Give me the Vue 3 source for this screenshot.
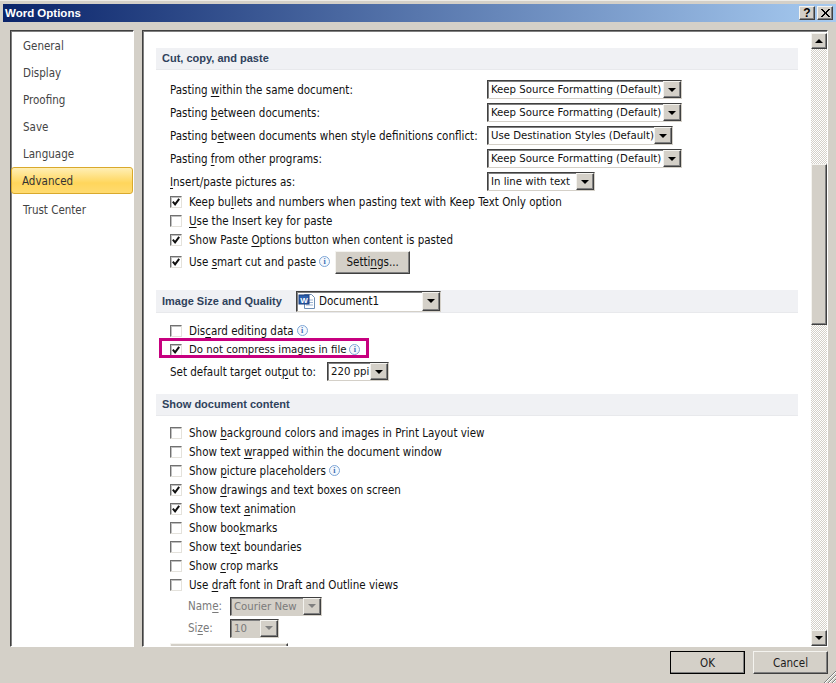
<script setup>
const nav = [
  { t: 'General' }, { t: 'Display' }, { t: 'Proofing' }, { t: 'Save' }, { t: 'Language' },
  { t: 'Advanced', active: true }, { t: 'Trust Center', last: true }
]
const split = (s) => {
  const i = s.indexOf('&')
  return i < 0 ? [s, '', ''] : [s.slice(0, i), s[i + 1], s.slice(i + 2)]
}
const pasteRows = [
  { l: 'Pasting &within the same document:', v: 'Keep Source Formatting (Default)', w: 195 },
  { l: 'Pasting &between documents:', v: 'Keep Source Formatting (Default)', w: 195 },
  { l: 'Pasting b&etween documents when style definitions conflict:', v: 'Use Destination Styles (Default)', w: 186 },
  { l: 'Pasting &from other programs:', v: 'Keep Source Formatting (Default)', w: 195 },
  { l: '&Insert/paste pictures as:', v: 'In line with text', w: 108 }
]
const pasteChecks = [
  { l: 'Keep bu&llets and numbers when pasting text with Keep Text Only option', c: true },
  { l: '&Use the Insert key for paste', c: false },
  { l: 'Show Paste &Options button when content is pasted', c: true }
]
const showChecks = [
  { l: 'Show &background colors and images in Print Layout view', c: false },
  { l: 'Show text &wrapped within the document window', c: false },
  { l: 'Show &picture placeholders', c: false, info: true },
  { l: 'Show &drawings and text boxes on screen', c: true },
  { l: 'Show text &animation', c: true },
  { l: 'Show boo&kmarks', c: false },
  { l: 'Show te&xt boundaries', c: false },
  { l: 'Show &crop marks', c: false },
  { l: 'Use &draft font in Draft and Outline views', c: false }
]
</script>

<template>
  <div class="window">
    <header class="titlebar">
      <span class="title">Word Options</span>
      <div class="caption-btns">
        <button class="cap raised">?</button>
        <button class="cap raised">
          <svg width="11" height="10" viewBox="0 0 11 10"><path d="M1 1l8 8M2 1l8 8M9 1l-8 8M10 1l-8 8" stroke="#000" stroke-width="1" fill="none"/></svg>
        </button>
      </div>
    </header>

    <main class="body">
      <nav class="nav sunken">
        <div v-for="n in nav" :key="n.t" class="nav-item" :class="{ active: n.active, last: n.last }">{{ n.t }}</div>
      </nav>

      <div class="pane sunken">
        <div class="content">
          <h3 class="section">Cut, copy, and paste</h3>
          <div class="pad paste-rows">
            <div v-for="r in pasteRows" :key="r.l" class="combo-row">
              <label class="combo-label"><template v-for="(p, i) in [split(r.l)]" :key="i">{{ p[0] }}<u>{{ p[1] }}</u>{{ p[2] }}</template></label>
              <div class="combo" :style="{ width: r.w + 'px' }">
                <span class="combo-text">{{ r.v }}</span>
                <span class="drop raised"><i class="tri"></i></span>
              </div>
            </div>
          </div>
          <div class="pad checks paste-checks">
            <div v-for="r in pasteChecks" :key="r.l" class="check-row">
              <span class="box"><svg v-if="r.c" width="10" height="10" viewBox="0 0 11 11"><path d="M2 5l2.500 3L9 2" stroke="#111" stroke-width="2.200" fill="none"/></svg></span>
              <span><template v-for="(p, i) in [split(r.l)]" :key="i">{{ p[0] }}<u>{{ p[1] }}</u>{{ p[2] }}</template></span>
            </div>
            <div class="check-row smart">
              <span class="box"><svg width="10" height="10" viewBox="0 0 11 11"><path d="M2 5l2.500 3L9 2" stroke="#111" stroke-width="2.200" fill="none"/></svg></span>
              <span>Use <u>s</u>mart cut and paste</span>
              <i class="info">i</i>
              <button class="settings raised">Setti<u>n</u>gs...</button>
            </div>
          </div>

          <h3 class="section image-head">
            <span class="image-title">Image Size and Quality</span>
            <div class="doc-combo">
              <svg class="doc-ico" width="18" height="17" viewBox="0 0 18 17">
                <path d="M6.500 1.500h7l3 3v11h-10z" fill="#fff" stroke="#6f8fb5"/>
                <path d="M8 7h7M8 9.500h7M8 12h7" stroke="#9db4d0"/>
                <rect x="1" y="2" width="10" height="9" fill="#2b5fae" stroke="#1b3f7d"/>
                <text x="6" y="9.500" font-size="8" font-weight="700" fill="#fff" text-anchor="middle" font-family="Liberation Sans, sans-serif">W</text>
              </svg>
              <span class="doc-name">Document1</span>
              <span class="drop raised doc-drop"><i class="tri"></i></span>
            </div>
          </h3>
          <div class="pad image-rows">
            <div class="check-row">
              <span class="box"></span>
              <span>Dis<u>c</u>ard editing data</span><i class="info">i</i>
            </div>
            <div class="check-row highlight">
              <span class="box"><svg width="10" height="10" viewBox="0 0 11 11"><path d="M2 5l2.500 3L9 2" stroke="#111" stroke-width="2.200" fill="none"/></svg></span>
              <span class="tight">Do <u>n</u>ot compress images in file</span><i class="info">i</i>
            </div>
            <div class="combo-row target">
              <label>Set default target out<u>p</u>ut to:</label>
              <div class="combo" style="width: 62px">
                <span class="combo-text">220 ppi</span>
                <span class="drop raised"><i class="tri"></i></span>
              </div>
            </div>
          </div>

          <h3 class="section show-head">Show document content</h3>
          <div class="pad checks show-checks">
            <div v-for="r in showChecks" :key="r.l" class="check-row">
              <span class="box"><svg v-if="r.c" width="10" height="10" viewBox="0 0 11 11"><path d="M2 5l2.500 3L9 2" stroke="#111" stroke-width="2.200" fill="none"/></svg></span>
              <span><template v-for="(p, i) in [split(r.l)]" :key="i">{{ p[0] }}<u>{{ p[1] }}</u>{{ p[2] }}</template></span><i v-if="r.info" class="info">i</i>
            </div>
            <div class="combo-row sub name-row">
              <label class="dis">Nam<u>e</u>:</label>
              <div class="combo disabled" style="width: 92px">
                <span class="combo-text">Courier New</span>
                <span class="drop raised"><i class="tri"></i></span>
              </div>
            </div>
            <div class="combo-row sub size-row">
              <label class="dis">Si<u>z</u>e:</label>
              <div class="combo disabled" style="width: 49px">
                <span class="combo-text">10</span>
                <span class="drop raised"><i class="tri"></i></span>
              </div>
            </div>
            <div class="cut-btn raised"></div>
          </div>
        </div>

        <div class="scrollbar">
          <span class="sb-btn raised"><i class="tri"></i></span>
          <div class="track">
            <div class="thumb raised"></div>
          </div>
          <span class="sb-btn raised"><i class="tri"></i></span>
        </div>
      </div>
    </main>

    <footer class="footer">
      <button class="dlg raised default">OK</button>
      <button class="dlg raised">Cancel</button>
      <svg class="grip" width="13" height="13" viewBox="0 0 13 13"><path d="M13 1L1 13M13 5L5 13M13 9L9 13" stroke="#808080" fill="none"/><path d="M13 2L2 13M13 6L6 13M13 10L10 13" stroke="#fff" fill="none"/></svg>
    </footer>
  </div>
</template>

<style>
html, body { margin: 0; background: #d4d0c8; }
</style>

<style scoped>
.window {
  width: 836px;
  height: 683px;
  box-sizing: border-box;
  padding-top: 3px;
  background: #d4d0c8;
  display: flex;
  flex-direction: column;
  overflow: hidden;
  font-family: "DejaVu Sans Condensed", "DejaVu Sans", Tahoma, sans-serif;
  font-stretch: condensed;
  font-size: 11.500px;
  color: #1c1c1c;
  border-top: 1px solid #eeece7;
}
button { font: inherit; font-stretch: inherit; color: inherit; padding: 0; }
u { text-underline-offset: 2px; text-decoration-thickness: 1px; }
.titlebar {
  height: 18px;
  margin-left: 3px;
  flex: none;
  display: flex;
  align-items: center;
  justify-content: space-between;
  background: linear-gradient(90deg, #0a246a 0%, #a6caf0 100%);
  padding: 0 3px 0 2px;
}
.title { color: #fff; font: 700 11.500px "Liberation Sans", Arial, sans-serif; }
.caption-btns { display: flex; gap: 2px; }
.raised {
  background: #d4d0c8;
  border: 1px solid;
  border-color: #f4f3ef #404040 #404040 #f4f3ef;
  box-shadow: inset -1px -1px 0 #808080;
  box-sizing: border-box;
}
.cap {
  width: 16px;
  height: 14px;
  display: flex;
  align-items: center;
  justify-content: center;
  font: 700 12px "Liberation Sans", sans-serif;
  color: #000;
}
.sunken {
  box-sizing: border-box;
  border: 1px solid;
  border-color: #404040 #fff #fff #404040;
  box-shadow: inset 1px 1px 0 #808080;
}
.body {
  flex: 1;
  min-height: 0;
  display: flex;
  gap: 8px;
  padding: 8px 8px 0 10px;
}
.nav {
  width: 124px;
  flex: none;
  background: #fff;
  padding: 1px 0 0 0;
  color: #444;
}
.nav-item {
  height: 27px;
  line-height: 29px;
  padding-left: 12px;
}
.nav-item.active {
  border: 1px solid #d9a92c;
  border-radius: 3px;
  background: linear-gradient(180deg, #ffefb5 0%, #ffd65c 60%, #ffdb70 100%);
  box-sizing: border-box;
  line-height: 27px;
  padding-left: 10px;
  color: #333;
}
.nav-item.last { margin-top: 2px; }
.pane {
  flex: 1;
  min-width: 0;
  background: #fff;
  display: flex;
  overflow: hidden;
}
.content {
  flex: 1;
  min-width: 0;
  padding: 17px 13px 0 13px;
  overflow: hidden;
  color: #111;
}
.section {
  margin: 0;
  height: 22px;
  padding-left: 6px;
  background: #f0f1f4;
  border-bottom: 1px solid #e8e9ec;
  box-sizing: border-box;
  font: 700 11px/21px "Liberation Sans", Arial, sans-serif;
  color: #2f425c;
  display: flex;
  align-items: center;
  white-space: nowrap;
}
.pad { padding-left: 14px; }
.paste-rows { padding-top: 8px; display: flex; flex-direction: column; }
.combo-row { height: 23px; display: flex; align-items: center; white-space: nowrap; }
.combo-label { width: 317px; flex: none; }
.combo {
  height: 19px;
  box-sizing: border-box;
  border: 1px solid;
  border-color: #404040 #d4d0c8 #d4d0c8 #404040;
  box-shadow: inset 1px 1px 0 #808080;
  background: #fff;
  display: flex;
  align-items: stretch;
  padding-left: 3px;
}
.combo-text { flex: 1; font-size: 11.300px; line-height: 17px; white-space: nowrap; overflow: hidden; }
.drop {
  width: 18px;
  flex: none;
  display: flex;
  align-items: center;
  justify-content: center;
}
.tri {
  display: block;
  width: 0;
  height: 0;
  border: 4px solid transparent;
  border-top: 4px solid #000;
  border-bottom-width: 0;
}
.checks, .image-rows { display: flex; flex-direction: column; }
.check-row {
  height: 19px;
  display: flex;
  align-items: center;
  white-space: nowrap;
}
.tight { font-size: 11.300px; }
.box {
  width: 12px;
  height: 12px;
  flex: none;
  box-sizing: border-box;
  border: 1px solid;
  border-color: #707070 #e4e2dc #e4e2dc #707070;
  box-shadow: inset 1px 1px 0 #c0c0c0;
  background: #fff;
  margin-right: 7px;
  display: flex;
  align-items: center;
  justify-content: center;
}
.paste-checks { margin-top: -1px; }
.smart { height: 23px; margin-top: 1px; }
.info {
  width: 11px;
  height: 11px;
  box-sizing: border-box;
  margin-left: 3px;
  border: 1px solid #7ea6d6;
  border-radius: 50%;
  flex: none;
  font: 700 8px/9px "Liberation Serif", serif;
  font-style: normal;
  color: #3c6eb4;
  text-align: center;
  background: #f4f8fd;
}
.settings {
  width: 75px;
  height: 23px;
  margin-left: 5px;
  margin-top: 1px;
}
.image-head {
  margin-top: 17px;
  height: 23px;
}
.image-title { width: 134px; flex: none; padding-top: 1px; }
.doc-combo {
  width: 145px;
  height: 21px;
  box-sizing: border-box;
  background: #fff;
  border: 1px solid;
  border-color: #404040 #d4d0c8 #d4d0c8 #404040;
  box-shadow: inset 1px 1px 0 #808080;
  display: flex;
  align-items: center;
  font: 400 11.500px "DejaVu Sans Condensed", "DejaVu Sans", sans-serif;
  font-stretch: condensed;
  color: #111;
  padding-left: 1px;
}
.doc-ico { margin-right: 3px; flex: none; }
.doc-name { flex: 1; }
.doc-drop { align-self: stretch; }
.image-rows { padding-top: 8px; }
.highlight { position: relative; }
.highlight::before {
  content: "";
  position: absolute;
  left: -11px;
  top: -2px;
  width: 204px;
  height: 14px;
  border: 3px solid #c7007f;
  pointer-events: none;
}
.target { margin-top: 1px; }
.target label { width: 157px; flex: none; }
.show-head { margin-top: 11px; }
.show-checks { padding-top: 7px; }
.sub { height: 22px; padding-left: 18px; }
.sub label { width: 42px; flex: none; }
.name-row { margin-top: 1px; }
.dis { color: #7a7a7a; }
.combo.disabled { background: #d4d0c8; color: #7a7a7a; }
.combo.disabled .tri { border-top-color: #808080; }
.cut-btn {
  width: 118px;
  height: 23px;
  margin: 4px 0 0 0;
  flex: none;
}
.scrollbar {
  width: 16px;
  flex: none;
  display: flex;
  flex-direction: column;
  margin: 2px 0 0;
}
.sb-btn {
  height: 16px;
  flex: none;
  display: flex;
  align-items: center;
  justify-content: center;
}
.sb-btn:first-child .tri {
  border-top-width: 0;
  border-bottom: 4px solid #000;
}
.track {
  flex: 1;
  padding-top: 115px;
  background-color: #fff;
  background-image: conic-gradient(#d4d0c8 25%, #fff 0 50%, #d4d0c8 0 75%, #fff 0);
  background-size: 2px 2px;
}
.thumb { height: 161px; }
.footer {
  height: 36px;
  flex: none;
  position: relative;
  display: flex;
  justify-content: flex-end;
  gap: 8px;
  padding: 4px 8px 0 0;
  box-sizing: border-box;
}
.dlg {
  width: 75px;
  height: 23px;
}
.dlg.default {
  outline: 1px solid #000;
  outline-offset: -1px;
}
.grip { position: absolute; right: 0; bottom: 0; }
</style>
